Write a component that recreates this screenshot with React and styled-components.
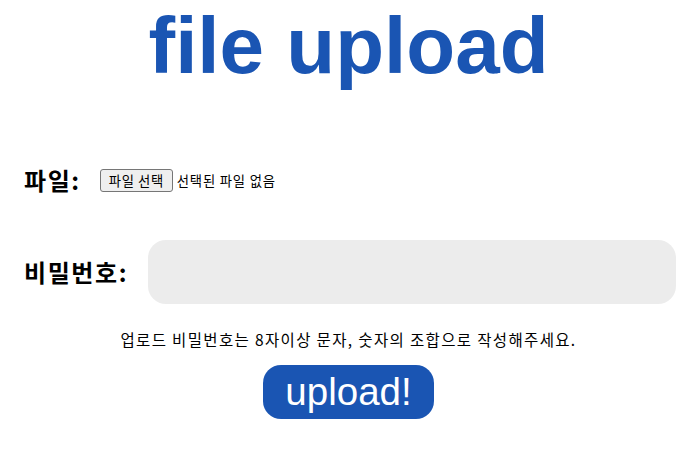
import React from 'react';
import styled, { createGlobalStyle } from 'styled-components';

const GlobalStyle = createGlobalStyle`
  body {
    margin: 0;
    background: #ffffff;
    font-family: "Liberation Sans", "Noto Sans CJK KR", Arial, sans-serif;
    color: #000000;
  }
`;

const Page = styled.div`
  width: 100%;
  display: flex;
  flex-direction: column;
`;

const Title = styled.h1`
  margin: 0;
  text-align: center;
  font-size: 80px;
  line-height: 92px;
  font-weight: 700;
  color: #1a55b3;
`;

const Form = styled.form`
  display: flex;
  flex-direction: column;
  padding: 0 21px 0 24px;
`;

const Row = styled.div`
  display: flex;
  align-items: center;
  margin-top: ${(props) => props.$top}px;
`;

const Label = styled.label`
  font-family: "Noto Sans CJK KR", "Liberation Sans", sans-serif;
  font-size: 24px;
  font-weight: 700;
  line-height: 36px;
  letter-spacing: 1.6px;
  margin-right: ${(props) => props.$gap}px;
  white-space: nowrap;
`;

const FakeFileButton = styled.button`
  font-family: "Noto Sans CJK KR", "Liberation Sans", sans-serif;
  font-size: 13.33px;
  line-height: 17px;
  letter-spacing: 0.6px;
  height: 23px;
  padding: 0 8px;
  background: #efefef;
  border: 1px solid #767676;
  border-radius: 3px;
  color: #000;
`;

const FileStatus = styled.span`
  font-family: "Noto Sans CJK KR", "Liberation Sans", sans-serif;
  font-size: 13.33px;
  letter-spacing: 0.8px;
  margin-left: 4px;
`;

const PasswordInput = styled.input`
  flex: 1;
  height: 64px;
  border: none;
  border-radius: 18px;
  background: #ececec;
  padding: 0 16px;
  font-size: 20px;
  box-sizing: border-box;
  &:focus {
    outline: none;
  }
`;

const Hint = styled.p`
  margin: 25px 0 0;
  text-align: center;
  font-family: "Noto Sans CJK KR", "Liberation Sans", sans-serif;
  font-size: 15.5px;
  letter-spacing: 1.35px;
  line-height: 20px;
`;

const UploadButton = styled.button`
  align-self: center;
  margin-top: 16px;
  width: 171px;
  height: 54px;
  border: none;
  border-radius: 18px;
  background: #1a55b3;
  color: #ffffff;
  font-family: "Liberation Sans", Arial, sans-serif;
  font-size: 38.5px;
  line-height: 54px;
  padding: 0;
`;

const App = () => {
  return (
    <Page>
      <GlobalStyle />
      <Title>file upload</Title>
      <Form onSubmit={(e) => e.preventDefault()}>
        <Row $top={70}>
          <Label $gap={19}>파일:</Label>
          <FakeFileButton type="button">파일 선택</FakeFileButton>
          <FileStatus>선택된 파일 없음</FileStatus>
        </Row>
        <Row $top={42}>
          <Label $gap={20}>비밀번호:</Label>
          <PasswordInput type="password" />
        </Row>
      </Form>
      <Hint>업로드 비밀번호는 8자이상 문자, 숫자의 조합으로 작성해주세요.</Hint>
      <UploadButton type="submit">upload!</UploadButton>
    </Page>
  );
};

export default App;
